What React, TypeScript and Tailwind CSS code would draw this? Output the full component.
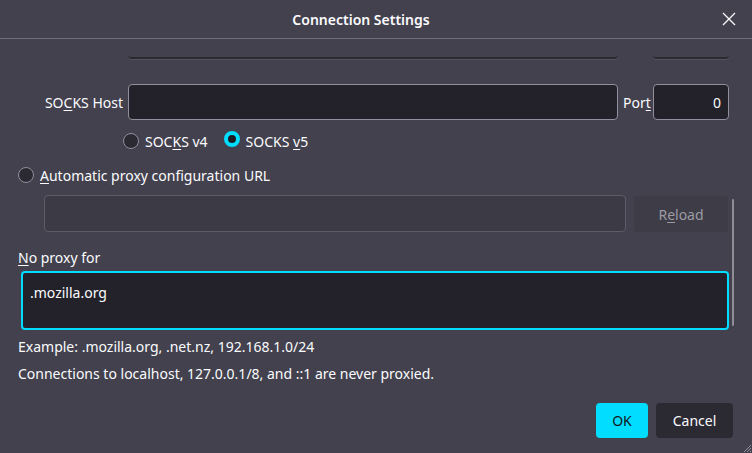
import React from "react";

const font = { fontFamily: '"Noto Sans", "Open Sans", sans-serif' };

function Radio({ checked }: { checked?: boolean }) {
  return checked ? (
    <span className="inline-block h-[16px] w-[16px] shrink-0 rounded-full border-[4px] border-[#00ddff] bg-[#1c1b22]" />
  ) : (
    <span className="inline-block h-[16px] w-[16px] shrink-0 rounded-full border border-[#8f8f9d] bg-[#2b2a33]" />
  );
}

export default function App() {
  return (
    <div
      className="relative flex h-[453px] w-[752px] flex-col overflow-hidden bg-[#42414d] text-[14px] text-[#fbfbfe]"
      style={font}
    >
      {/* title bar */}
      <div className="relative flex h-[39px] shrink-0 items-center justify-center border-b border-[#6e6d78] pr-[30px]">
        <span className="text-[14px] font-semibold">Connection Settings</span>
        <svg
          className="absolute right-[16px] top-[12px]"
          width="14"
          height="14"
          viewBox="0 0 14 14"
          fill="none"
          stroke="#fbfbfe"
          strokeWidth="1.3"
        >
          <path d="M1 1 L13 13 M13 1 L1 13" />
        </svg>
      </div>

      {/* bottom edge of the row scrolled above */}
      <div className="flex h-[20px] shrink-0 items-end">
        <div className="ml-[128px] h-[4px] w-[490px] rounded-b-[4px] border-b-2 border-[#2b2a33] shadow-[0_1px_0_#54535e]" />
        <div className="ml-[35px] h-[4px] w-[76px] rounded-b-[4px] border-b-2 border-[#2b2a33] shadow-[0_1px_0_#54535e]" />
      </div>

      {/* SOCKS host row */}
      <div className="mt-[25px] flex h-[36px] items-center">
        <span className="w-[123px] text-right">
          SO<span className="underline underline-offset-2">C</span>KS Host
        </span>
        <div className="ml-[5px] h-[36px] w-[490px] rounded-[4px] border border-[#8f8f9d] bg-[#23222b]" />
        <span className="ml-[5px] w-[30px]">
          Por<span className="underline underline-offset-2">t</span>
        </span>
        <div className="flex h-[36px] w-[76px] items-center justify-end rounded-[4px] border border-[#8f8f9d] bg-[#23222b] pr-[7px]">
          0
        </div>
      </div>

      {/* SOCKS version */}
      <div className="mt-[11px] flex h-[20px] items-center pl-[123px]">
        <Radio />
        <span className="ml-[6px]">
          SOC<span className="underline underline-offset-2">K</span>S v4
        </span>
        <span className="ml-[16px]">
          <Radio checked />
        </span>
        <span className="ml-[6px]">
          SOCKS <span className="underline underline-offset-2">v</span>5
        </span>
      </div>

      {/* automatic proxy */}
      <div className="mt-[14px] flex h-[20px] items-center pl-[18px]">
        <Radio />
        <span className="ml-[6px]">
          <span className="underline underline-offset-2">A</span>utomatic proxy configuration URL
        </span>
      </div>

      <div className="mt-[10px] flex h-[37px] items-center pl-[44px]">
        <div className="h-[37px] w-[582px] rounded-[4px] border border-[#5d5c67] bg-[#3b3a45]" />
        <div className="ml-[8px] flex h-[36px] w-[94px] items-center justify-center rounded-[4px] bg-[#3d3c47] pt-[2px] text-[#9c9ba3]">
          R<span className="underline underline-offset-2">e</span>load
        </div>
      </div>

      {/* no proxy */}
      <div className="mt-[16px] pl-[18px] leading-[20px]">
        <span className="underline underline-offset-2">N</span>o proxy for
      </div>
      <div className="ml-[21px] mt-[3px] h-[59px] w-[708px] rounded-[4px] border-2 border-[#00ddff] bg-[#23222b] px-[7px] pt-[10px] leading-[20px]">
        .mozilla.org
      </div>

      <div className="mt-[7px] pl-[18px] leading-[20px]">Example: .mozilla.org, .net.nz, 192.168.1.0/24</div>
      <div className="mt-[7px] pl-[18px] leading-[20px]">
        Connections to localhost, 127.0.0.1/8, and ::1 are never proxied.
      </div>

      {/* buttons */}
      <div className="mt-[19px] flex justify-end gap-[8px] pr-[19px]">
        <div className="flex h-[35px] w-[52px] items-center justify-center rounded-[4px] bg-[#00ddff] text-[#15141a]">
          OK
        </div>
        <div className="flex h-[35px] w-[77px] items-center justify-center rounded-[4px] bg-[#2b2a33]">
          Cancel
        </div>
      </div>

      {/* overlay scrollbar thumb */}
      <div className="absolute left-[732px] top-[199px] h-[127px] w-[2px] rounded-full bg-[#8f8e96]" />

      {/* resize grip */}
      <svg className="absolute bottom-0 right-0" width="12" height="12" viewBox="0 0 12 12" stroke="#8f8f9d" strokeWidth="1">
        <path d="M11 4 L4 11 M11 7 L7 11 M11 10 L10 11" />
      </svg>
    </div>
  );
}
